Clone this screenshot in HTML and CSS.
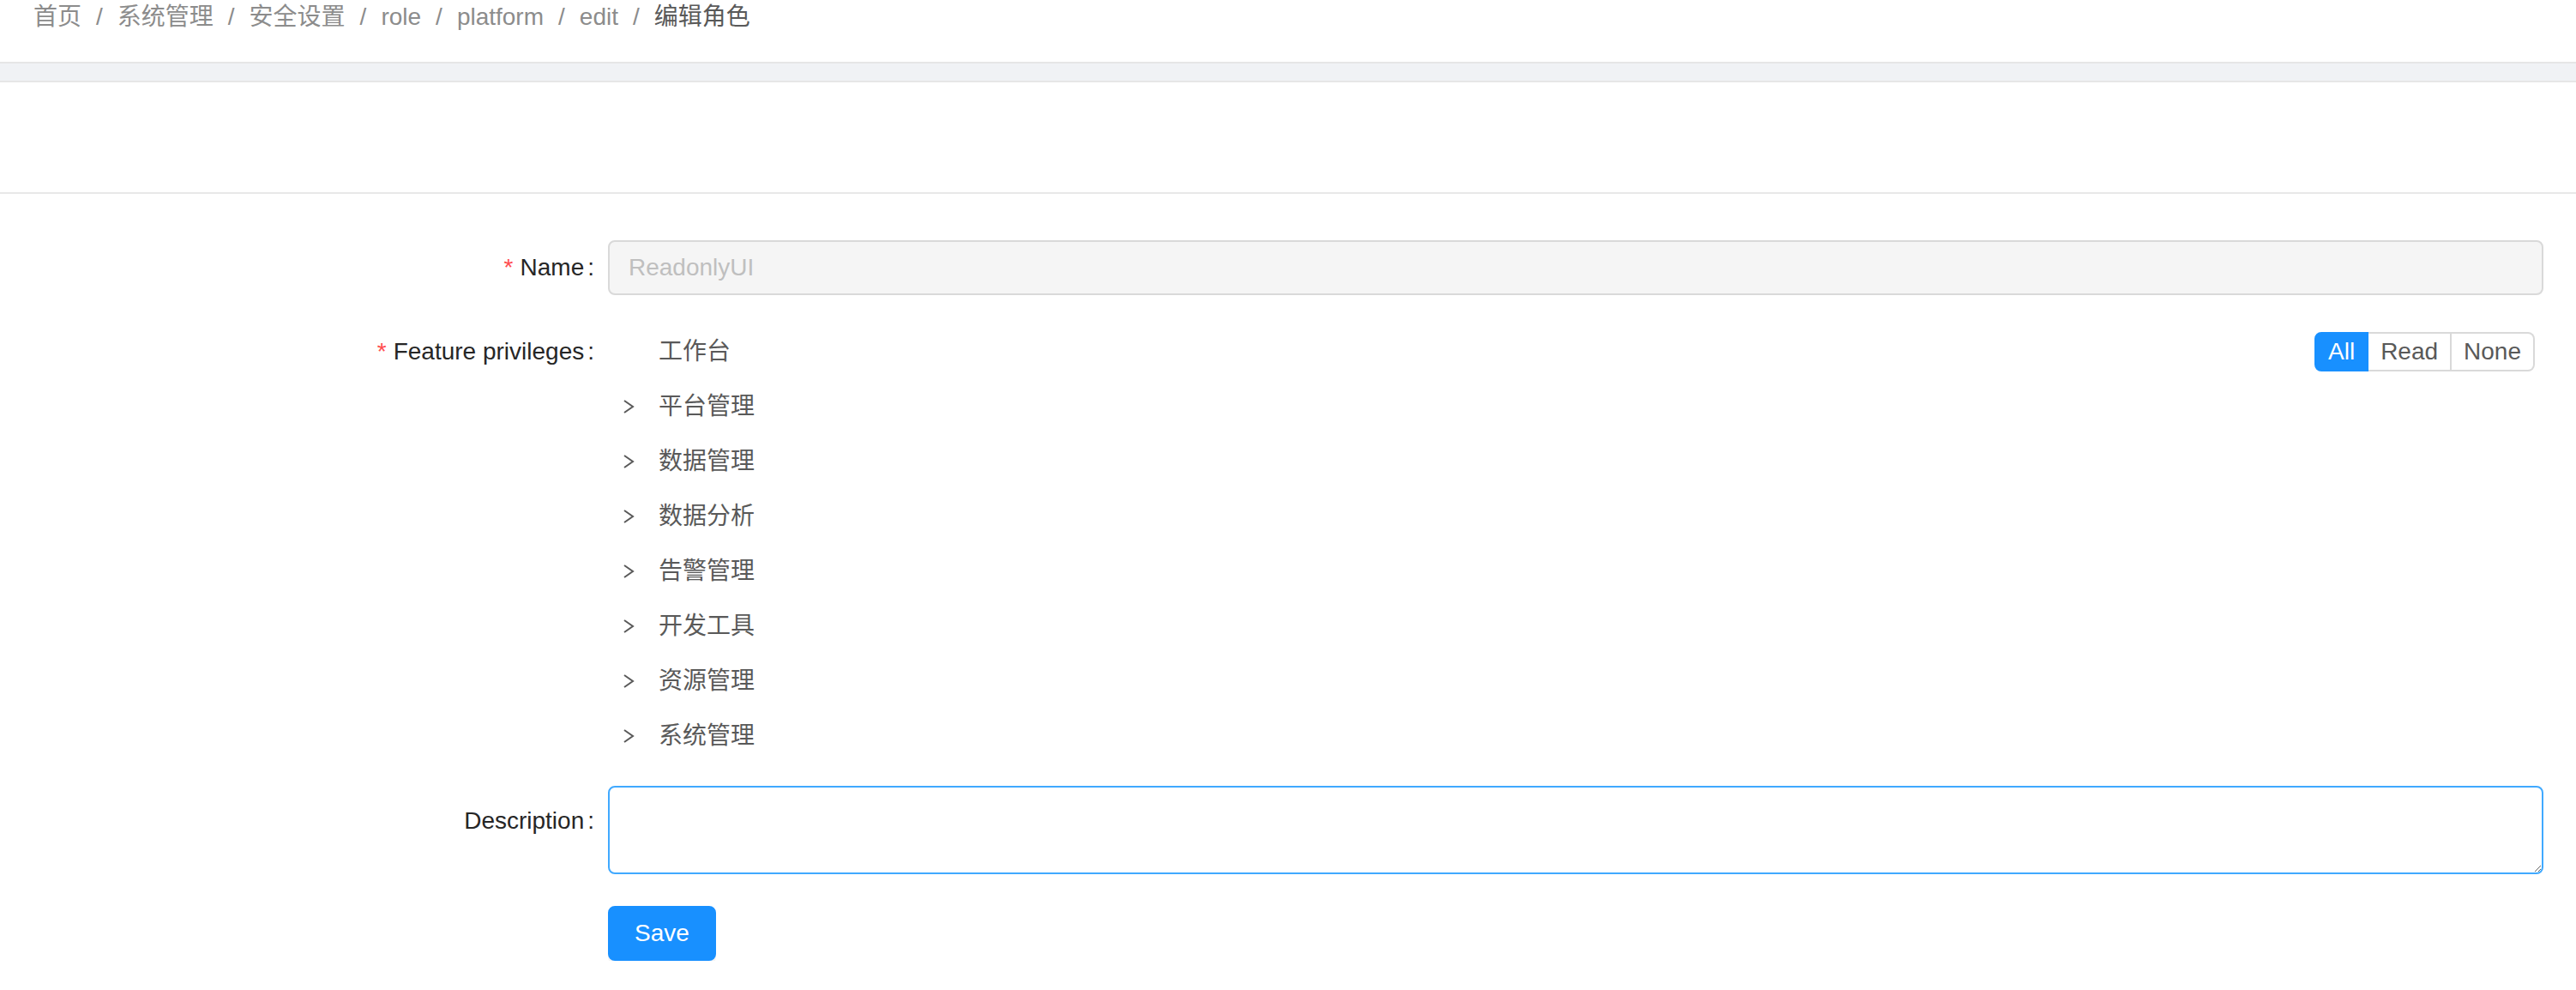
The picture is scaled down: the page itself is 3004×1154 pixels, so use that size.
FILE: index.html
```html
<!DOCTYPE html>
<html lang="zh-CN">
<head>
<meta charset="utf-8">
<title>编辑角色</title>
<link rel="stylesheet" href="styles.css">
</head>
<body>
<nav class="breadcrumb"><span class="crumb">首页</span><span class="sep">/</span><span class="crumb">系统管理</span><span class="sep">/</span><span class="crumb">安全设置</span><span class="sep">/</span><span class="crumb">role</span><span class="sep">/</span><span class="crumb">platform</span><span class="sep">/</span><span class="crumb">edit</span><span class="sep">/</span><span class="crumb current">编辑角色</span></nav>
<div class="band"></div>
<div class="card">
  <div class="card-head"></div>
  <div class="card-body">
    <form class="form">
      <div class="item item-name">
        <label class="label required">Name</label>
        <div class="control"><input class="input" type="text" value="ReadonlyUI" disabled></div>
      </div>
      <div class="item item-feature">
        <label class="label required">Feature privileges</label>
        <div class="control tree">
          <div class="tree-row">
            <span class="switcher"></span>
            <span class="tree-title">工作台</span>
            <div class="seg">
              <button type="button" class="seg-btn active">All</button>
              <button type="button" class="seg-btn">Read</button>
              <button type="button" class="seg-btn">None</button>
            </div>
          </div>
          <div class="tree-row"><span class="switcher"><svg width="14" height="18" viewBox="0 0 14 18"><path d="M2 2 L12 9 L2 16" fill="none" stroke="#595959" stroke-width="2"/></svg></span><span class="tree-title">平台管理</span></div>
          <div class="tree-row"><span class="switcher"><svg width="14" height="18" viewBox="0 0 14 18"><path d="M2 2 L12 9 L2 16" fill="none" stroke="#595959" stroke-width="2"/></svg></span><span class="tree-title">数据管理</span></div>
          <div class="tree-row"><span class="switcher"><svg width="14" height="18" viewBox="0 0 14 18"><path d="M2 2 L12 9 L2 16" fill="none" stroke="#595959" stroke-width="2"/></svg></span><span class="tree-title">数据分析</span></div>
          <div class="tree-row"><span class="switcher"><svg width="14" height="18" viewBox="0 0 14 18"><path d="M2 2 L12 9 L2 16" fill="none" stroke="#595959" stroke-width="2"/></svg></span><span class="tree-title">告警管理</span></div>
          <div class="tree-row"><span class="switcher"><svg width="14" height="18" viewBox="0 0 14 18"><path d="M2 2 L12 9 L2 16" fill="none" stroke="#595959" stroke-width="2"/></svg></span><span class="tree-title">开发工具</span></div>
          <div class="tree-row"><span class="switcher"><svg width="14" height="18" viewBox="0 0 14 18"><path d="M2 2 L12 9 L2 16" fill="none" stroke="#595959" stroke-width="2"/></svg></span><span class="tree-title">资源管理</span></div>
          <div class="tree-row"><span class="switcher"><svg width="14" height="18" viewBox="0 0 14 18"><path d="M2 2 L12 9 L2 16" fill="none" stroke="#595959" stroke-width="2"/></svg></span><span class="tree-title">系统管理</span></div>
        </div>
      </div>
      <div class="item item-desc">
        <label class="label label-desc">Description</label>
        <div class="control"><textarea class="textarea"></textarea></div>
      </div>
      <div class="item item-save">
        <span></span>
        <div class="control"><button type="button" class="btn-primary">Save</button></div>
      </div>
    </form>
  </div>
</div>
</body>
</html>
```
FILE: styles.css
```css
* { box-sizing: border-box; }
html, body {
  margin: 0;
  padding: 0;
  background: #fff;
  overflow: hidden;
}
body {
  font-family: "Liberation Sans", "Noto Sans CJK SC", sans-serif;
  font-size: 28px;
  color: #262626;
}
.breadcrumb {
  height: 72px;
  padding-left: 39px;
  line-height: 40px;
  color: #8c8c8c;
  white-space: nowrap;
}
.crumb.current { color: #595959; }
.sep {
  margin: 0 17px;
  color: #8c8c8c;
}
.band {
  height: 24px;
  background: #f0f2f5;
  border-top: 2px solid #e6e6e6;
  border-bottom: 2px solid #e6e6e6;
}
.card-head {
  height: 130px;
  border-bottom: 2px solid #e8e8e8;
}
.card-body {
  padding: 54px 38px 0 0;
}
.form { display: flex; flex-direction: column; }
.item {
  display: grid;
  grid-template-columns: 709px 1fr;
  align-items: start;
}
.item-name { margin-bottom: 34px; }
.item-feature { margin-bottom: 26px; }
.item-desc { margin-bottom: 37px; }
.label {
  text-align: right;
  padding-right: 16px;
  line-height: 64px;
  height: 64px;
  color: #262626;
  white-space: nowrap;
}
.label::after {
  content: ":";
  margin-left: 4px;
}
.label.required::before {
  content: "*";
  color: #ff4d4f;
  margin-right: 8px;
}
.label-desc { padding-top: 9px; }
.input {
  display: block;
  width: 100%;
  height: 64px;
  padding: 0 22px;
  font: inherit;
  font-size: 28px;
  color: #bfbfbf;
  background: #f5f5f5;
  border: 2px solid #d9d9d9;
  border-radius: 8px;
  outline: none;
}
.tree { display: flex; flex-direction: column; }
.tree-row {
  display: flex;
  align-items: center;
  height: 64px;
  padding-right: 10px;
}
.switcher {
  width: 48px;
  height: 64px;
  display: flex;
  align-items: center;
  justify-content: center;
  flex: none;
}
.switcher svg { display: block; }
.tree-title {
  padding-left: 11px;
  color: #595959;
  line-height: 64px;
}
.seg {
  margin-left: auto;
  display: flex;
  height: 46px;
}
.seg-btn {
  font: inherit;
  font-size: 28px;
  height: 46px;
  line-height: 42px;
  padding: 0 14px;
  background: #fff;
  color: #595959;
  border: 2px solid #d9d9d9;
  border-left: none;
  cursor: pointer;
}
.seg-btn.active {
  background: #1890ff;
  border: 2px solid #1890ff;
  color: #fff;
  border-radius: 8px 0 0 8px;
}
.seg-btn:last-child { border-radius: 0 8px 8px 0; }
.textarea {
  display: block;
  width: 100%;
  height: 103px;
  padding: 8px 22px;
  font: inherit;
  border: 2px solid #40a9ff;
  border-radius: 8px;
  outline: none;
  resize: vertical;
}
.btn-primary {
  font: inherit;
  font-size: 28px;
  height: 64px;
  width: 126px;
  padding: 0;
  color: #fff;
  background: #1890ff;
  border: 2px solid #1890ff;
  border-radius: 8px;
  box-shadow: 0 4px 0 rgba(0, 0, 0, 0.045);
  cursor: pointer;
}
```
